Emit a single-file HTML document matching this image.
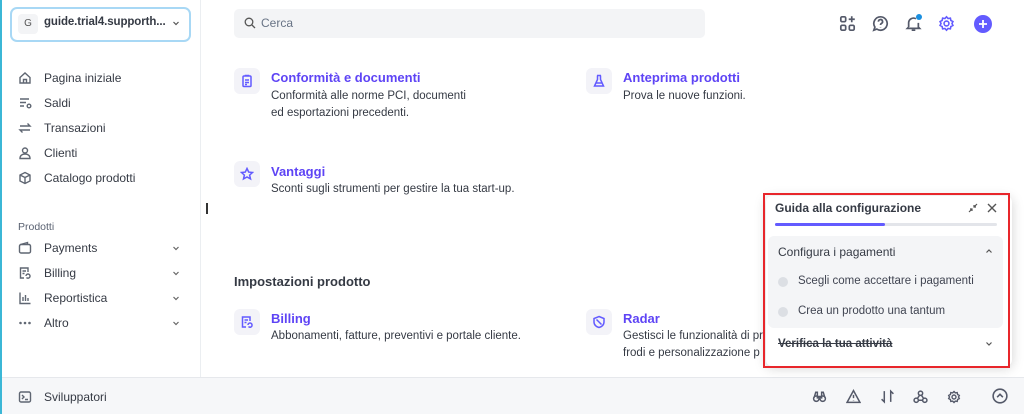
<!DOCTYPE html>
<html><head><meta charset="utf-8"><style>
*{margin:0;padding:0;box-sizing:border-box}
body{width:1024px;height:414px;overflow:hidden;background:#fff;font-family:"Liberation Sans",sans-serif;color:#353a44;position:relative;font-size:12px}
.a{position:absolute}
.nav{position:absolute;left:18px;display:flex;align-items:center;font-size:12px;color:#353a44}
.nav svg{width:14px;height:14px;margin-right:12px;stroke:#5f6672;fill:none;stroke-width:1.4}
.ib{position:absolute;width:26px;height:26px;border-radius:6px;background:#f3f3f8;display:flex;align-items:center;justify-content:center}
.ib svg{width:14px;height:14px;stroke:#635bff;fill:none;stroke-width:1.5}
.t{position:absolute;color:#5e44f5;font-weight:bold;font-size:13px}
.d{position:absolute;font-size:11.5px;line-height:17px;color:#353a44}
.ti svg{stroke:#545969;fill:none;stroke-width:1.4}
</style></head><body>
<div class="a" style="left:0;top:0;width:2px;height:414px;background:#3bb7d6"></div>
<div class="a" style="left:200px;top:0;width:1px;height:377px;background:#ebeef1"></div>
<div class="a" style="left:10px;top:7px;width:181px;height:35px;border:2px solid #a8d8f5;border-radius:7px;"></div>
<div class="a" style="left:18px;top:14px;width:20px;height:20px;background:#f3f4f6;border-radius:4px;font-size:10px;color:#555;text-align:center;line-height:20px">G</div>
<div class="a" style="left:44px;top:16px;font-size:11.5px;font-weight:bold;color:#353a44;letter-spacing:-0.1px">guide.trial4.supporth...</div>
<svg class="a" style="left:172px;top:19px" width="8" height="8" viewBox="0 0 8 8"><path d="M1.5 3l2.5 2.5 2.5-2.5" stroke="#555" fill="none" stroke-width="1.2"/></svg>
<div class="nav" style="top:71px"><svg viewBox="0 0 14 14"><path d="M2 6.5L7 2l5 4.5V12H2z M5.5 12V8.5h3V12"/></svg>Pagina iniziale</div>
<div class="nav" style="top:96px"><svg viewBox="0 0 14 14"><path d="M2 3h9M2 6.5h6M2 10h4"/><circle cx="11" cy="10" r="1.8"/></svg>Saldi</div>
<div class="nav" style="top:121px"><svg viewBox="0 0 14 14"><path d="M2 5h10l-2.5-2.5M12 9H2l2.5 2.5"/></svg>Transazioni</div>
<div class="nav" style="top:146px"><svg viewBox="0 0 14 14"><circle cx="7" cy="4.5" r="2.5"/><path d="M2 12.5c0-3 2-4.5 5-4.5s5 1.5 5 4.5z"/></svg>Clienti</div>
<div class="nav" style="top:171px"><svg viewBox="0 0 14 14"><path d="M7 1.5l5 2.5v6l-5 2.5-5-2.5V4z M2 4l5 2.5 5-2.5M7 6.5v6"/></svg>Catalogo prodotti</div>
<div class="a" style="left:18px;top:221px;font-size:10.5px;color:#596171">Prodotti</div>
<div class="nav" style="top:241px"><svg viewBox="0 0 14 14"><rect x="1.5" y="3.5" width="11" height="8.5" rx="1.5"/><path d="M2.5 3.5l7-2v2"/></svg>Payments</div>
<div class="nav" style="top:266px"><svg viewBox="0 0 14 14"><path d="M10 6V2H2.5v10H6 M4.5 5h3.5M4.5 7.5h2"/><path d="M8 10a2 2 0 0 1 4 0M12 10a2 2 0 0 1-3.5 1.5"/></svg>Billing</div>
<div class="nav" style="top:291px"><svg viewBox="0 0 14 14"><path d="M2 1.5v11h10.5M5 10V6M7.5 10V4M10 10V7"/></svg>Reportistica</div>
<div class="nav" style="top:316px"><svg viewBox="0 0 14 14"><circle cx="2.5" cy="7" r=".6"/><circle cx="7" cy="7" r=".6"/><circle cx="11.5" cy="7" r=".6"/></svg>Altro</div>
<svg class="a" style="left:172px;top:245px" width="8" height="90" viewBox="0 0 8 90"><g stroke="#666" fill="none" stroke-width="1.2"><path d="M1.5 2l2.5 2.5 2.5-2.5"/><path d="M1.5 27l2.5 2.5 2.5-2.5"/><path d="M1.5 52l2.5 2.5 2.5-2.5"/><path d="M1.5 77l2.5 2.5 2.5-2.5"/></g></svg>
<div class="a" style="left:2px;top:377px;width:1022px;height:37px;background:#f6f7f9;border-top:1px solid #e6e8ec"></div>
<div class="nav" style="top:390px"><svg viewBox="0 0 14 14"><rect x="1.5" y="2" width="11" height="10" rx="1.5"/><path d="M4 5l2 2-2 2M7 9.5h3"/></svg>Sviluppatori</div>
<div class="ti">
<svg class="a" style="left:812px;top:389px" width="15" height="15" viewBox="0 0 14 14"><circle cx="4" cy="9" r="2.5"/><circle cx="10" cy="9" r="2.5"/><path d="M2 8l1.5-5h1.5v6M12 8l-1.5-5H9v6M5 7h4"/></svg>
<svg class="a" style="left:846px;top:389px" width="15" height="15" viewBox="0 0 14 14"><path d="M7 1.5l6 11H1z M7 5.5v3M7 10.5v.3"/></svg>
<svg class="a" style="left:880px;top:389px" width="15" height="15" viewBox="0 0 14 14"><path d="M4 2v10l-2.5-2.5M10 12V2l2.5 2.5"/></svg>
<svg class="a" style="left:913px;top:389px" width="15" height="15" viewBox="0 0 14 14"><circle cx="7" cy="4" r="2"/><circle cx="3" cy="10.5" r="2"/><circle cx="11" cy="10.5" r="2"/><path d="M6 6l-2 3M5 10.5h4M8 6l2 3"/></svg>
<svg class="a" style="left:947px;top:390px" width="14" height="14" viewBox="0 0 14 14"><circle cx="7" cy="7" r="2"/><path d="M7 1.5l1.3 1.4 1.9-.3.4 1.9 1.7.9-.8 1.6.8 1.6-1.7.9-.4 1.9-1.9-.3L7 12.5l-1.3-1.4-1.9.3-.4-1.9-1.7-.9L2.5 7l-.8-1.6 1.7-.9.4-1.9 1.9.3z"/></svg>
<svg class="a" style="left:992px;top:388px" width="16" height="16" viewBox="0 0 14 14"><circle cx="7" cy="7" r="6"/><path d="M4.5 8L7 5.5 9.5 8"/></svg>
</div>
<div class="a" style="left:234px;top:9px;width:471px;height:29px;background:#f3f4f6;border-radius:5px"></div>
<svg class="a" style="left:244px;top:17px" width="12" height="12" viewBox="0 0 12 12"><circle cx="5" cy="5" r="3.8" stroke="#555" fill="none" stroke-width="1.3"/><path d="M8 8l3 3" stroke="#555" stroke-width="1.3"/></svg>
<div class="a" style="left:261px;top:16px;font-size:12px;color:#687385">Cerca</div>
<div class="ti">
<svg class="a" style="left:839px;top:15px" width="17" height="17" viewBox="0 0 14 14"><rect x="1.5" y="1.5" width="4" height="4" rx="1"/><rect x="1.5" y="8.5" width="4" height="4" rx="1"/><rect x="8.5" y="8.5" width="4" height="4" rx="1"/><path d="M10.5 1v5M8 3.5h5"/></svg>
<svg class="a" style="left:872px;top:15px" width="17" height="17" viewBox="0 0 14 14"><path d="M7 1.5a5.5 5.5 0 1 1-3 10.1L1.5 12.5l.9-2.5A5.5 5.5 0 0 1 7 1.5z"/><path d="M5.3 5.5a1.7 1.7 0 1 1 2.4 1.5c-.5.3-.7.6-.7 1.2M7 10v.3"/></svg>
<svg class="a" style="left:905px;top:15px" width="17" height="17" viewBox="0 0 14 14"><path d="M3 10V6.5a4 4 0 0 1 6-3.4M11 6.5V10l1 1H2l1-1M5.5 12.5h3"/></svg>
</div>
<div class="a" style="left:916px;top:14px;width:6px;height:6px;border-radius:50%;background:#1a8fe0"></div>
<svg class="a" style="left:938px;top:15px" width="17" height="17" viewBox="0 0 14 14"><g stroke="#635bff" fill="none" stroke-width="1.3"><circle cx="7" cy="7" r="2"/><path d="M7 1.5l1.3 1.4 1.9-.3.4 1.9 1.7.9-.8 1.6.8 1.6-1.7.9-.4 1.9-1.9-.3L7 12.5l-1.3-1.4-1.9.3-.4-1.9-1.7-.9L2.5 7l-.8-1.6 1.7-.9.4-1.9 1.9.3z"/></g></svg>
<div class="a" style="left:974px;top:15px;width:18px;height:18px;border-radius:50%;background:#635bff"></div>
<svg class="a" style="left:974px;top:15px" width="18" height="18" viewBox="0 0 18 18"><path d="M9 5v8M5 9h8" stroke="#fff" stroke-width="1.8"/></svg>
<div class="ib" style="left:234px;top:68px"><svg viewBox="0 0 14 14"><rect x="3" y="2" width="8" height="10.5" rx="1"/><path d="M5.5 2v-.5h3V2M5 6h4M5 8.5h4M5 10.5h2"/></svg></div>
<div class="t" style="left:271px;top:70px">Conformità e documenti</div>
<div class="d" style="left:271px;top:88px">Conformità alle norme PCI, documenti<br>ed esportazioni precedenti.</div>
<div class="ib" style="left:586px;top:68px"><svg viewBox="0 0 14 14"><path d="M5 1.5h4M5.5 1.5v4L2.5 12h9L8.5 5.5v-4M4 9h6"/></svg></div>
<div class="t" style="left:623px;top:70px">Anteprima prodotti</div>
<div class="d" style="left:623px;top:88px">Prova le nuove funzioni.</div>
<div class="ib" style="left:234px;top:161px"><svg viewBox="0 0 14 14"><path d="M7 1.5l1.7 3.6 3.8.4-2.9 2.6.9 3.8L7 10l-3.5 1.9.9-3.8L1.5 5.5l3.8-.4z"/></svg></div>
<div class="t" style="left:271px;top:164px">Vantaggi</div>
<div class="d" style="left:271px;top:181px">Sconti sugli strumenti per gestire la tua start-up.</div>
<div class="a" style="left:206px;top:203px;width:2px;height:11px;background:#333"></div>
<div class="a" style="left:234px;top:274px;font-size:13px;font-weight:bold;color:#353a44">Impostazioni prodotto</div>
<div class="ib" style="left:234px;top:309px"><svg viewBox="0 0 14 14"><path d="M10 6V2H2.5v10H6 M4.5 5h3.5M4.5 7.5h2"/><path d="M8 10a2 2 0 0 1 4 0M12 10a2 2 0 0 1-3.5 1.5"/></svg></div>
<div class="t" style="left:271px;top:311px">Billing</div>
<div class="d" style="left:271px;top:328px">Abbonamenti, fatture, preventivi e portale cliente.</div>
<div class="ib" style="left:586px;top:309px"><svg viewBox="0 0 14 14"><path d="M7 1.5l5 2v3.5c0 3-2.5 5-5 5.5-2.5-.5-5-2.5-5-5.5V3.5z M4.5 4.5l5 5"/></svg></div>
<div class="t" style="left:623px;top:311px">Radar</div>
<div class="d" style="left:623px;top:328px;white-space:nowrap">Gestisci le funzionalità di pr<br>frodi e personalizzazione p</div>
<div class="a" style="left:766px;top:196px;width:246px;height:170px;background:#fff;border-radius:6px;box-shadow:0 2px 12px rgba(0,0,0,.18)"></div>
<div class="a" style="left:763px;top:193px;width:247px;height:175px;border:2px solid #e8262b"></div>
<div class="a" style="left:775px;top:201px;font-size:12px;font-weight:bold;color:#353a44">Guida alla configurazione</div>
<svg class="a" style="left:968px;top:203px" width="10" height="10" viewBox="0 0 10 10"><path d="M1 9l3-3M2 6h2v2M9 1L6 4M6 2v2h2" stroke="#555" fill="none" stroke-width="1.2"/></svg>
<svg class="a" style="left:987px;top:203px" width="10" height="10" viewBox="0 0 10 10"><path d="M1 1l8 8M9 1l-8 8" stroke="#555" stroke-width="1.4"/></svg>
<div class="a" style="left:775px;top:223px;width:222px;height:3px;background:#e3e5ea;border-radius:2px"></div>
<div class="a" style="left:775px;top:223px;width:110px;height:3px;background:#635bff;border-radius:2px"></div>
<div class="a" style="left:768px;top:236px;width:235px;height:92px;background:#f4f5f7;border-radius:6px"></div>
<div class="a" style="left:778px;top:245px;font-size:12px;color:#353a44">Configura i pagamenti</div>
<svg class="a" style="left:985px;top:247px" width="8" height="8" viewBox="0 0 8 8"><path d="M1.5 5.5l2.5-2.5 2.5 2.5" stroke="#555" fill="none" stroke-width="1.2"/></svg>
<div class="a" style="left:778px;top:277px;width:10px;height:10px;border-radius:50%;background:#dcdfe4"></div>
<div class="a" style="left:798px;top:275px;font-size:11.5px;color:#414552">Scegli come accettare i pagamenti</div>
<div class="a" style="left:778px;top:307px;width:10px;height:10px;border-radius:50%;background:#dcdfe4"></div>
<div class="a" style="left:798px;top:305px;font-size:11.5px;color:#414552">Crea un prodotto una tantum</div>
<div class="a" style="left:778px;top:338px;font-size:11.5px;font-weight:bold;color:#353a44;text-decoration:line-through">Verifica la tua attività</div>
<svg class="a" style="left:985px;top:340px" width="8" height="8" viewBox="0 0 8 8"><path d="M1.5 2.5l2.5 2.5 2.5-2.5" stroke="#555" fill="none" stroke-width="1.2"/></svg>
</body></html>
